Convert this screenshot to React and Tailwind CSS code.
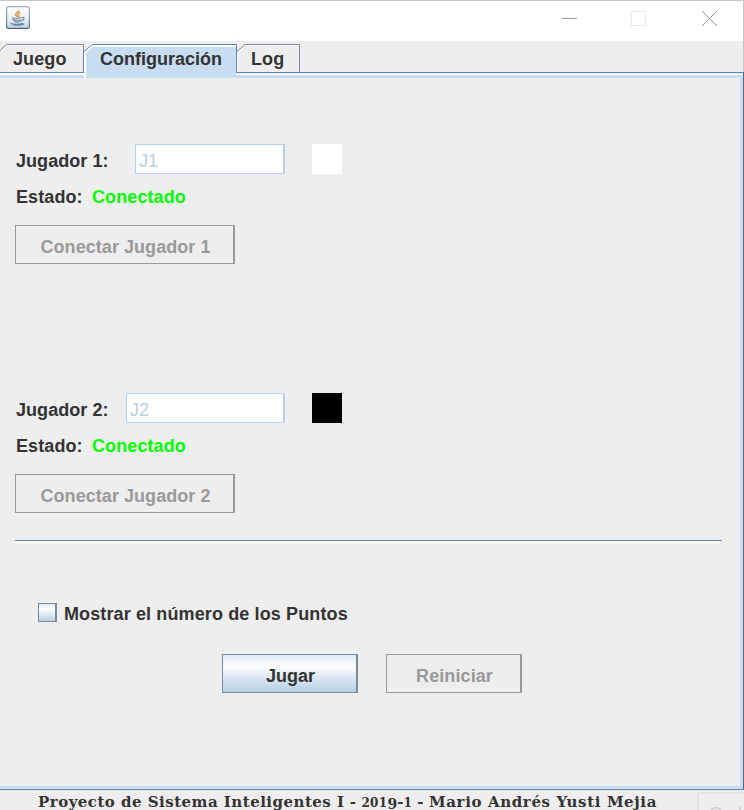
import React from "react";

function JavaIcon() {
  return (
    <svg width="24" height="24" viewBox="0 0 24 24" fill="none">
      <defs>
        <linearGradient id="tile" x1="0" y1="0" x2="0" y2="1">
          <stop offset="0" stopColor="#ffffff" />
          <stop offset="0.5" stopColor="#eef1f4" />
          <stop offset="1" stopColor="#c9d2da" />
        </linearGradient>
        <linearGradient id="edge" x1="0" y1="0" x2="0" y2="1">
          <stop offset="0" stopColor="#a3afbb" />
          <stop offset="0.6" stopColor="#7189a3" />
          <stop offset="1" stopColor="#3f658f" />
        </linearGradient>
      </defs>
      <rect x="0.6" y="0.6" width="22.8" height="21.8" rx="2.2" fill="url(#tile)" stroke="url(#edge)" strokeWidth="1.1" />
      <path d="M12.800 4c.8 2-3.800 2.800-3.300 4.700.2.800 1.500 1.200 1.500 2.400M14.500 6.500c-3 1.300-3.200 2-1.900 3 .5.500.1 1.100-.3 1.500" stroke="#dc8420" strokeWidth="1.300" />
      <path d="M6.200 11.600c1.500.9 7.300.8 9.300 0M6.800 12c0 1.400.7 2.600 1.500 3.100M8 13.700c2 .7 5 .7 7 0M8.500 15.600c1.800.6 4 .6 6 0M16 11.500c2.600-.7 3.200 1.900-.8 3.300M5.200 17c-2.200 1.400 8.300 2 12 .2M7.500 19c4 .5 8 .1 10.500-.9" stroke="#6485a6" strokeWidth="1.050" />
    </svg>
  );
}

function TitleBar() {
  return (
    <header className="flex h-[41px] shrink-0 justify-between border-t border-r border-[#c6c6c6] bg-white">
      <div className="pt-[5px] pl-[6px]"><JavaIcon /></div>
      <svg className="mt-[10px] mr-[25px]" width="156" height="16" shapeRendering="crispEdges" fill="none">
        <path d="M0 7.500h15" stroke="#999" />
        <rect x="69.500" y="0.500" width="14" height="14" stroke="#e8e8e8" />
        <path d="M140 0l15 15M155 0l-15 15" stroke="#909090" shapeRendering="auto" />
      </svg>
    </header>
  );
}

function Tabs() {
  return (
    <nav className="flex h-[31px] shrink-0 pt-[3px] text-[18px] leading-[30px] font-bold tracking-[0.1px] text-[#333]">
      <div className="relative h-[28px] w-[84px] shrink-0 pl-[13px]">
        <svg className="absolute inset-0" width="84" height="28" fill="none">
          <path d="M0 6.500L6.500 .5H83.500V7" stroke="#7a8a99" />
          <path d="M1 7.500L7 1.500H82" stroke="#fff" />
          <path d="M83.500 7V28" stroke="#6382bf" />
        </svg>
        <span className="relative">Juego</span>
      </div>
      <div className="relative h-[34px] w-[153px] shrink-0 pl-[16px] tracking-normal">
        <svg className="absolute inset-0" width="153" height="34" fill="none">
          <path d="M0 34V8L8.500 0H152V29H153V34Z" fill="#fff" />
          <path d="M2 34V9L8.500 3H152V31H153V34Z" fill="#c8ddf2" />
          <path d="M0 7.500L8.500 .5H152.500V28" stroke="#6382bf" />
        </svg>
        <span className="relative">Configuración</span>
      </div>
      <div className="relative h-[28px] w-[63px] shrink-0 pl-[14px]">
        <svg className="absolute inset-0" width="63" height="28" fill="none">
          <path d="M0 7.500L8 .5H62.500V28" stroke="#7a8a99" />
          <path d="M.5 28V9L8.500 1.500H61" stroke="#fff" />
        </svg>
        <span className="relative">Log</span>
      </div>
    </nav>
  );
}

function Player({ n, wide, black }) {
  return (
    <section className="text-[18px] leading-[30px] font-bold tracking-[0.1px]">
      <div className="flex h-[30px]">
        <label className={wide ? "w-[111px] pt-[2px] pl-px tracking-[0.05px]" : "w-[120px] pt-[2px] pl-px tracking-[0.05px]"}>Jugador {n}:</label>
        <div className={(wide ? "w-[159px]" : "w-[150px]") + " border border-r-2 border-[#b8cfe5] bg-white pt-px pl-[3px] font-normal text-[#b8cfe5]"}>J{n}</div>
        <div className={(black ? "bg-black" : "bg-white") + " ml-[27px] size-[30px]"} />
      </div>
      <div className="mt-[8px] flex h-[30px] pl-px">
        <span className="w-[76px]">Estado:</span>
        <span className="text-[#00ff00]">Conectado</span>
      </div>
      <button className="mt-[13px] block h-[39px] w-[220px] border border-r-2 border-[#999] pt-[5px] pl-[2px] text-center leading-[33px] tracking-[0.05px] text-[#999]">Conectar Jugador {n}</button>
    </section>
  );
}

export default function App() {
  return (
    <div className="flex h-[810px] w-[744px] flex-col overflow-hidden bg-[#eee] font-['Liberation_Sans',Arial,sans-serif] text-[#333]">
      <TitleBar />
      <div className="flex h-[31px] shrink-0 border-r border-[#c6c6c6]"><Tabs /></div>
      <div className="flex h-[718px] shrink-0 flex-col border-r border-b border-r-[#52677d] border-b-[#7a8a99]">
        <div className="flex h-[3px] shrink-0">
          <div className="w-[84px] border-t border-[#6382bf] bg-white" />
          <div className="w-[2px] bg-white" />
          <div className="w-[150px] bg-[#c8ddf2]" />
          <div className="flex-1 border-t border-[#6382bf] bg-[linear-gradient(#dce9f6_50%,#fff_50%)]" />
        </div>
        <main className="flex-1 border-y-3 border-r-3 border-[#c8ddf2] pl-[15px]">
          <div className="pt-[66px]"><Player n={1} /></div>
          <div className="pt-[129px]"><Player n={2} wide black /></div>
          <div className="mt-[27px] h-[3px] w-[707px] border-t border-[#6382bf] bg-[linear-gradient(#f5f5f5_50%,#fff_50%)]" />
          <div className="mt-[60px] flex h-[19px] pl-[23px] text-[18px] font-bold">
            <span className="h-[19px] w-[19px] border border-r-2 border-[#7a8a99] bg-[linear-gradient(#dde8f3,#fff_30%,#b8cfe5)]" />
            <span className="ml-[7px] leading-[22px] tracking-[0.12px]">Mostrar el número de los Puntos</span>
          </div>
          <div className="mt-[32px] flex gap-[28px] pl-[207px] text-[18px] leading-[33px] font-bold">
            <button className="h-[39px] w-[136px] border border-r-2 border-[#7a8a99] bg-[linear-gradient(#dde8f3,#fff_30%,#dde8f3_60%,#b8cfe5)] pt-[5px] pl-[2px]">Jugar</button>
            <button className="h-[39px] w-[136px] border border-r-2 border-[#999] pt-[5px] pl-[2px] tracking-[0.1px] text-[#999]">Reiniciar</button>
          </div>
        </main>
      </div>
      <footer className="flex h-[20px] shrink-0 justify-between border-t border-[#d3e3f4] pl-[38px] font-['DejaVu_Serif',serif] text-[15px] leading-[23px] font-bold whitespace-pre">
        <span className="tracking-[0.63px]"><span className="tracking-[0.48px]">Proyecto de Sistema Inteligentes I</span><span className="tracking-[0.1px]"> - <span className="text-[12px] tracking-[0.3px]">201</span><span className="relative top-[2px] text-[14px]">9</span>-<span className="text-[12px]">1</span> - </span>Mario Andrés Yusti Mejia</span>
        <div className="mt-[1px] h-[20px] w-[47px] overflow-hidden border-t-2 border-l-2 border-[#e3e3e3] pt-[9px] pl-[10px] font-['Liberation_Sans',sans-serif] text-[18px] font-normal text-[#d0d0d0]">Cerl</div>
      </footer>
    </div>
  );
}
